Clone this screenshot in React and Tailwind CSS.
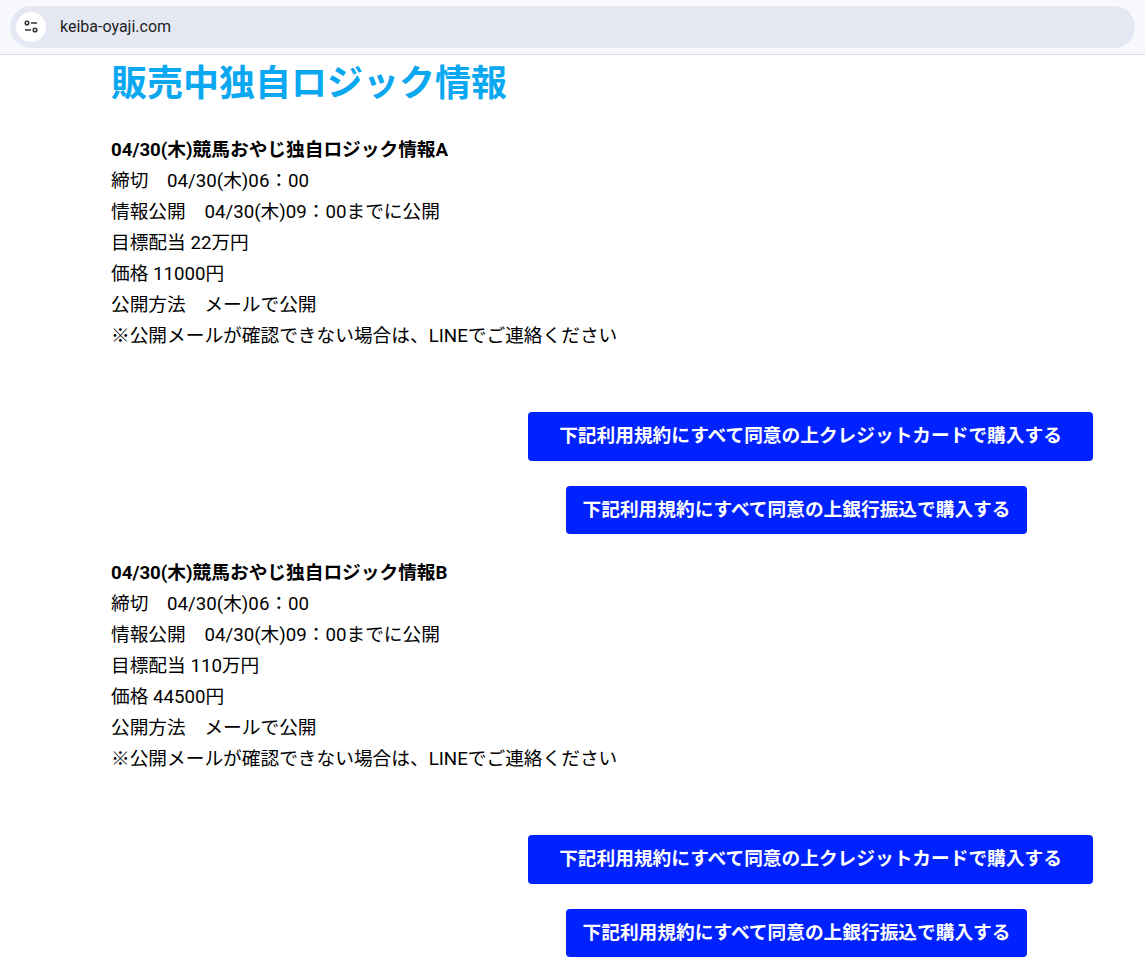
import React from "react";

const font = { fontFamily: 'Roboto, "Noto Sans CJK JP", sans-serif' };

const items = [
  { name: "A", target: "22万円", price: "11000円" },
  { name: "B", target: "110万円", price: "44500円" },
];

const Item = ({ item }) => (
  <div className="flex flex-col">
    <div className="text-[18.7px] leading-[31px] text-black">
      <p className="font-bold">04/30(木)競馬おやじ独自ロジック情報{item.name}</p>
      <p>締切　04/30(木)06：00</p>
      <p>情報公開　04/30(木)09：00までに公開</p>
      <p>目標配当 {item.target}</p>
      <p>価格 {item.price}</p>
      <p>公開方法　メールで公開</p>
      <p>※公開メールが確認できない場合は、LINEでご連絡ください</p>
    </div>
    <div className="flex flex-col items-end mt-[60px] mb-[24px] gap-[25px]">
      <button className="w-[565px] h-[49px] bg-[#0022ff] text-white font-bold text-[18.7px] rounded">
        下記利用規約にすべて同意の上クレジットカードで購入する
      </button>
      <button className="w-[461px] h-[48px] mr-[66px] bg-[#0022ff] text-white font-bold text-[18.7px] rounded">
        下記利用規約にすべて同意の上銀行振込で購入する
      </button>
    </div>
  </div>
);

export default function App() {
  return (
    <div className="bg-white min-h-screen" style={font}>
      <div className="h-[55px] bg-[#f8f9fd] border-b border-[#dcdde3] flex items-center px-[10px]">
        <div className="flex items-center h-[42px] w-full rounded-full bg-[#e5e8f3]">
          <div className="ml-[6px] w-[30px] h-[30px] rounded-full bg-white flex items-center justify-center">
            <svg width="16" height="16" viewBox="0 0 16 16" fill="none" stroke="#333" strokeWidth="1.5">
              <circle cx="4" cy="4" r="1.8" />
              <line x1="8" y1="4" x2="14" y2="4" />
              <circle cx="12" cy="11" r="1.8" />
              <line x1="2" y1="11" x2="8" y2="11" />
            </svg>
          </div>
          <span className="ml-[14px] text-[16px] text-[#1f1f1f]">keiba-oyaji.com</span>
        </div>
      </div>
      <div className="ml-[111px] w-[982px]">
        <h1 className="text-[36px] font-bold text-[#0aa8f0] leading-[48px] pt-[5px] mb-[27px]">販売中独自ロジック情報</h1>
        {items.map((it) => (
          <Item key={it.name} item={it} />
        ))}
      </div>
    </div>
  );
}
